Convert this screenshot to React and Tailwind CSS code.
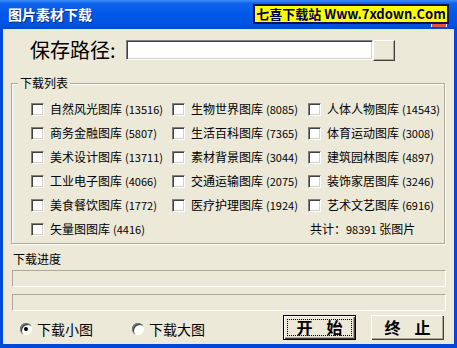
import React from "react";

const F = { fontFamily: '"Noto Sans CJK SC", "Liberation Sans", sans-serif' };

function Label({ text }) {
  const m = text.match(/^(.*?)(\s*\(\d+\))$/);
  if (!m) return <span>{text}</span>;
  return (
    <span>
      {m[1]}
      <span className="text-[11px] ml-[3px]">{m[2].trim()}</span>
    </span>
  );
}

function Check({ label }) {
  return (
    <div className="flex items-center gap-[6px] h-[24px]">
      <div className="w-[13px] h-[13px] bg-white border border-t-[#808080] border-l-[#808080] border-b-white border-r-white shadow-[inset_1px_1px_0_#404040,inset_-1px_-1px_0_#D4D0C8]" />
      <span className="text-[12px] leading-[13px] text-black whitespace-nowrap">
        <Label text={label} />
      </span>
    </div>
  );
}

function Radio({ checked, label }) {
  return (
    <div className="flex items-center gap-[5px]">
      <div className="w-[12px] h-[12px] rounded-full bg-white flex items-center justify-center shadow-[inset_1px_1px_0_#808080,inset_2px_2px_0_#404040,inset_-1px_-1px_0_#fff]">
        {checked && <div className="w-[4px] h-[4px] rounded-full bg-black" />}
      </div>
      <span className="text-[14px] leading-[16px] text-black">{label}</span>
    </div>
  );
}

const rows = [
  ["自然风光图库 (13516)", "生物世界图库 (8085)", "人体人物图库 (14543)"],
  ["商务金融图库 (5807)", "生活百科图库 (7365)", "体育运动图库 (3008)"],
  ["美术设计图库 (13711)", "素材背景图库 (3044)", "建筑园林图库 (4897)"],
  ["工业电子图库 (4066)", "交通运输图库 (2075)", "装饰家居图库 (3246)"],
  ["美食餐饮图库 (1772)", "医疗护理图库 (1924)", "艺术文艺图库 (6916)"],
];

export default function App() {
  return (
    <div style={F} className="w-[457px] h-[348px] flex flex-col bg-[#0049D8] overflow-hidden">
      {/* title bar */}
      <div className="h-[29px] flex items-start bg-[linear-gradient(180deg,#3C8CF8_0%,#0F63EC_12%,#0058E8_50%,#0053E0_85%,#0048D0_100%)] relative">
        <span className="ml-[8px] mt-[6px] text-white font-bold text-[14px] leading-[16px] [text-shadow:1px_1px_0_#0A2A80]">图片素材下载</span>
        <div className="ml-auto mr-[8px] mt-[4px] relative">
          <div className="w-[196px] h-[20px] bg-[#FFFF00] border-2 border-[#101060] flex items-center justify-center">
            <span className="text-[13px] font-bold leading-[16px] text-[#000050] whitespace-nowrap">七喜下载站 Www.7xdown.Com</span>
          </div>
          <div className="absolute right-[2px] top-[20px] w-[16px] h-[3px] bg-[#E0533C] border-l border-r border-white" />
        </div>
      </div>
      {/* body */}
      <div className="flex-1 mx-[3px] mb-[4px] bg-[#ECE9D8] flex flex-col">
        {/* path row */}
        <div className="flex items-start mt-[11px] ml-[27px]">
          <span className="text-[20px] leading-[22px] text-black mt-[-1px] w-[96px] whitespace-nowrap">保存路径:</span>
          <div className="w-[247px] h-[20px] bg-white border border-t-[#808080] border-l-[#808080] border-b-white border-r-white shadow-[inset_1px_1px_0_#404040,inset_-1px_-1px_0_#D4D0C8]" />
          <div className="w-[22px] h-[21px] bg-[#ECE9D8] border border-t-white border-l-white border-b-[#404040] border-r-[#404040] shadow-[inset_-1px_-1px_0_#ACA899]" />
        </div>
        {/* group box */}
        <div className="relative mt-[22px] ml-[8px] w-[434px] h-[161px] border border-[#ACA899] shadow-[inset_1px_1px_0_#fff,1px_1px_0_#fff]">
          <span className="absolute left-[6px] top-[-8px] bg-[#ECE9D8] px-[2px] text-[12px] leading-[14px] text-black">下载列表</span>
          <div className="mt-[13px] ml-[19px] flex flex-col">
            {rows.map((r, i) => (
              <div key={i} className="flex">
                <div className="w-[141px]"><Check label={r[0]} /></div>
                <div className="w-[136px]"><Check label={r[1]} /></div>
                <div><Check label={r[2]} /></div>
              </div>
            ))}
            <div className="flex">
              <div className="w-[279px]"><Check label="矢量图图库 (4416)" /></div>
              <div className="h-[24px] flex items-center">
                <span className="text-[12px] leading-[13px] text-black whitespace-nowrap">共计：<span className="text-[11px]">98391</span> 张图片</span>
              </div>
            </div>
          </div>
        </div>
        {/* progress */}
        <span className="mt-[8px] ml-[10px] text-[12px] leading-[14px] text-black">下载进度</span>
        <div className="mt-[4px] ml-[9px] w-[434px] h-[17px] border border-t-[#ACA899] border-l-[#ACA899] border-b-white border-r-white" />
        <div className="mt-[7px] ml-[9px] w-[434px] h-[17px] border border-t-[#ACA899] border-l-[#ACA899] border-b-white border-r-white" />
        {/* bottom */}
        <div className="flex items-start mt-[4px]">
          <div className="ml-[17px] mt-[6px] w-[112px]"><Radio checked label="下载小图" /></div>
          <div className="mt-[6px]"><Radio label="下载大图" /></div>
          <div className="ml-auto mr-[10px] flex gap-[15px]">
            <div className="w-[73px] h-[25px] border border-black bg-[#ECE9D8] flex items-center justify-center shadow-[inset_1px_1px_0_#fff,inset_-1px_-1px_0_#404040,inset_-2px_-2px_0_#ACA899]">
              <div className="w-[65px] h-[17px] border border-dotted border-black flex items-center justify-center">
                <span className="text-[16px] font-bold leading-[17px] text-black tracking-[14px] mr-[-14px]">开始</span>
              </div>
            </div>
            <div className="w-[73px] h-[25px] bg-[#ECE9D8] flex items-center justify-center shadow-[inset_1px_1px_0_#fff,inset_-1px_-1px_0_#404040,inset_-2px_-2px_0_#ACA899]">
              <span className="text-[16px] font-bold leading-[17px] text-black tracking-[14px] mr-[-14px]">终止</span>
            </div>
          </div>
        </div>
      </div>
    </div>
  );
}
